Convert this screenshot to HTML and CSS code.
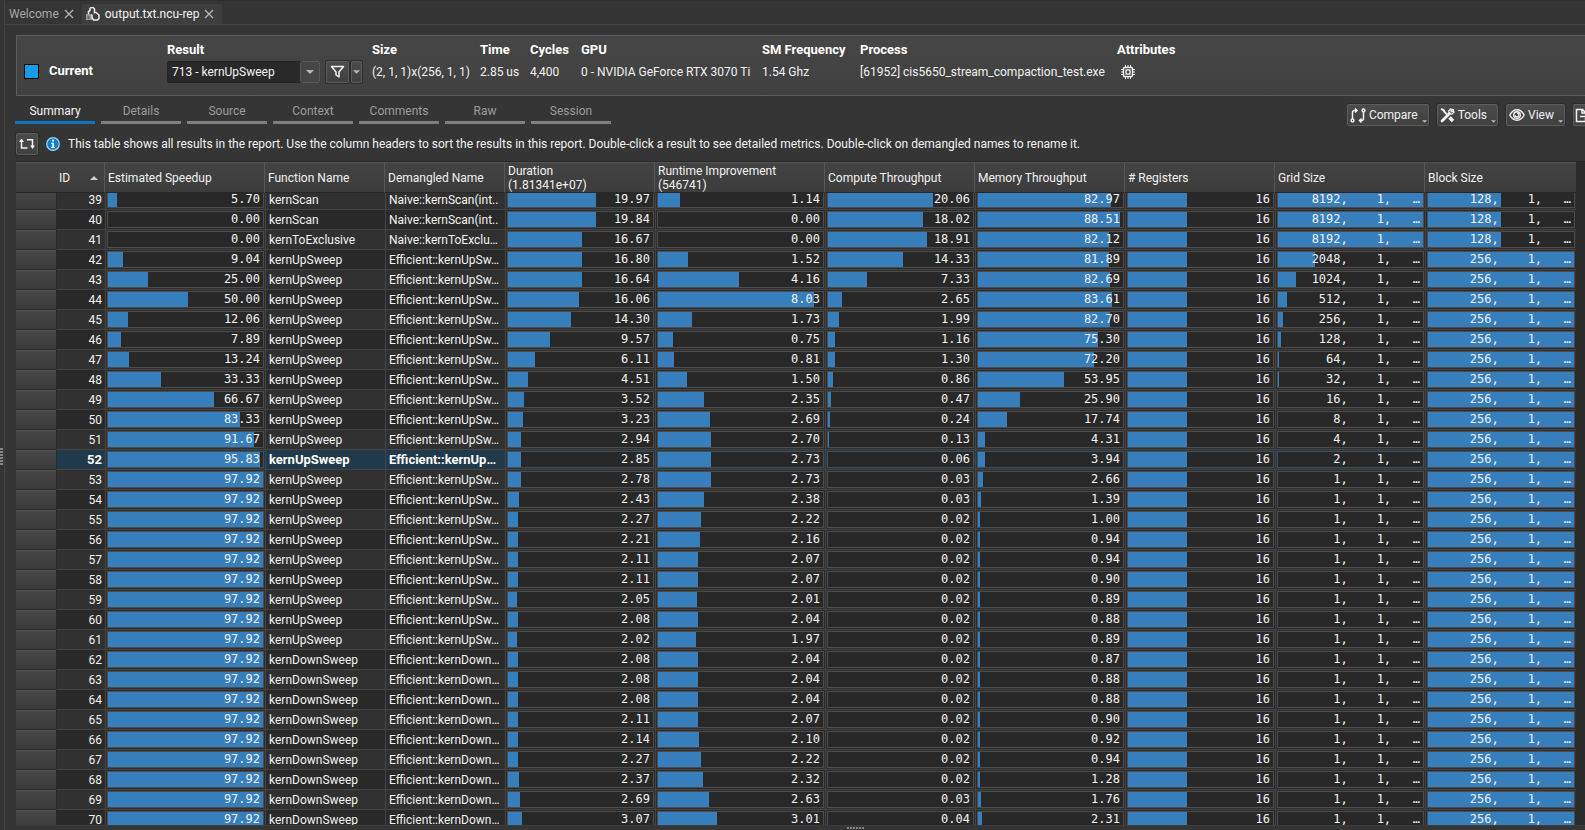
FILE: index.html
```
<!DOCTYPE html>
<html lang="en">
<head>
<meta charset="utf-8">
<title>output.txt.ncu-rep</title>
<link rel="stylesheet" href="styles.css">
</head>
<body>
<div class="rail" aria-hidden="true"><span class="grip grip-v"></span></div>
<div class="window">
  <nav class="doc-tabs">
    <div class="doc-tab"><a href="#welcome">Welcome</a><button class="close" aria-label="Close Welcome"><svg width="10" height="10" viewBox="0 0 10 10"><path d="M1 1l8 8M9 1l-8 8"/></svg></button></div>
    <div class="doc-tab active"><svg class="doc-icon" width="14" height="14" viewBox="0 0 14 14"><path d="M0 7h6v6h-6z" fill="#999"/><path d="M2.500 7v-2.500l1.500-1v-2l1.500-1h1.500l1.500 1.500v4.500M6 7.500v3l1.500 2.500h4l1.500-1.500v-3.500l-3.500-3" fill="none" stroke="#eee" stroke-width="1.500"/><path d="M1.500 9.500h2v2h-2z" fill="#555"/></svg><a href="#report">output.txt.ncu-rep</a><button class="close" aria-label="Close report"><svg width="10" height="10" viewBox="0 0 10 10"><path d="M1 1l8 8M9 1l-8 8"/></svg></button></div>
  </nav>

  <main class="report">
    <section class="baseline">
      <div class="current"><span class="swatch"></span><b>Current</b></div>
      <div class="field result">
        <label for="result">Result</label>
        <div class="picker">
          <div class="combo">
            <select id="result"><option>713 - kernUpSweep</option></select>
            <span class="combo-arrow"><svg width="8" height="4" viewBox="0 0 8 4"><path d="M0 0h8l-4 4z"/></svg></span>
          </div>
          <button class="btn filter" aria-label="Filter"><svg width="15" height="14" viewBox="0 0 15 14"><path d="M1.500 1.500h12l-4.500 5.500v5l-3-2v-3z" fill="none" stroke="#f2f2f2" stroke-width="1.500" stroke-linejoin="round"/></svg></button>
          <button class="btn filter-more" aria-label="Filter options"><svg width="7" height="4" viewBox="0 0 8 4"><path d="M0 0h8l-4 4z" fill="#b8b8b8"/></svg></button>
        </div>
      </div>
      <dl class="facts">
        <div class="field"><dt>Size</dt><dd>(2, 1, 1)x(256, 1, 1)</dd></div>
        <div class="field"><dt>Time</dt><dd>2.85 us</dd></div>
        <div class="field"><dt>Cycles</dt><dd>4,400</dd></div>
        <div class="field"><dt>GPU</dt><dd>0 - NVIDIA GeForce RTX 3070 Ti</dd></div>
        <div class="field"><dt>SM Frequency</dt><dd>1.54 Ghz</dd></div>
        <div class="field"><dt>Process</dt><dd>[61952] cis5650_stream_compaction_test.exe</dd></div>
        <div class="field"><dt>Attributes</dt><dd class="chip"><svg width="14" height="14" viewBox="0 0 14 14" fill="none" stroke="#f0f0f0"><rect x="2.500" y="2.500" width="9" height="9" rx="1" stroke-width="1.400"/><rect x="5" y="5" width="4" height="4" stroke-width="1.300"/><path d="M4.500 0v2M7 0v2M9.500 0v2M4.500 12v2M7 12v2M9.500 12v2M0 4.500h2M0 7h2M0 9.500h2M12 4.500h2M12 7h2M12 9.500h2"/></svg></dd></div>
      </dl>
    </section>

    <div class="bar">
      <nav class="pages">
        <a class="on" href="#summary">Summary</a>
        <a href="#details">Details</a>
        <a href="#source">Source</a>
        <a href="#context">Context</a>
        <a href="#comments">Comments</a>
        <a href="#raw">Raw</a>
        <a href="#session">Session</a>
      </nav>
      <div class="tools">
        <button class="btn menu"><svg width="16" height="15" viewBox="-1 0 16 15" fill="none" stroke="#f2f2f2" stroke-width="1.500"><circle cx="1.500" cy="12.500" r="1.400"/><path d="M1.500 11v-6.500q0-2 2-2h2M4 .5l2 2-2 2"/><circle cx="12.500" cy="2.500" r="1.400"/><path d="M12.500 4v6.500q0 2-2 2h-2M10.500 10.500l-2 2 2 2"/></svg>Compare<svg class="corner" width="5" height="3" viewBox="0 0 8 4"><path d="M0 0h8l-4 4z"/></svg></button>
        <button class="btn menu"><svg width="15" height="15" viewBox="0 0 15 15" fill="none" stroke="#f2f2f2"><path d="M1 1l2.500 1 1 2 4 4" stroke-width="2"/><path d="M9.500 9.500l3.500 3.500" stroke-width="3.500"/><path d="M2 13l7.500-7.500" stroke-width="2.800" stroke-linecap="round"/><path d="M13 1.500l-2.500-.5-1.800 2 .4 2.800 2.900.4 2-1.800-.4-1.700-1.600 1.300-1.200-1.100z" stroke-width="1.200"/></svg>Tools<svg class="corner" width="5" height="3" viewBox="0 0 8 4"><path d="M0 0h8l-4 4z"/></svg></button>
        <button class="btn menu"><svg width="16" height="14" viewBox="0 0 16 14" fill="none" stroke="#f2f2f2" stroke-width="1.400"><path d="M.8 7q2.700-5.200 7.200-5.200t7.200 5.200q-2.700 5.200-7.200 5.200t-7.200-5.200z"/><circle cx="8" cy="7" r="3.300"/><path d="M8 5.200q1.800 0 1.800 1.800t-1.800 1.800-1.800-1.600" stroke-width="1.200"/></svg>View<svg class="corner" width="5" height="3" viewBox="0 0 8 4"><path d="M0 0h8l-4 4z"/></svg></button>
        <button class="btn export" aria-label="Export"><svg width="15" height="15" viewBox="0 0 15 15" fill="none" stroke="#f2f2f2" stroke-width="1.500"><path d="M10.500 10v3.500h-9v-12h6l3 3v2M7 1.500v3.500h3.500M5 8.500h9"/></svg></button>
      </div>
    </div>

    <div class="hint">
      <button class="btn transpose" aria-label="Transpose table"><svg width="16" height="12" viewBox="0 0 16 12" fill="none" stroke="#f2f2f2" stroke-width="1.500"><path d="M2.500 3v7h6M8 1.800h5.500v6.500"/><path d="M0 4l2.500-3.500 2.500 3.500zM11 7.500h5l-2.500 3.500z" fill="#f2f2f2" stroke="none"/></svg></button>
      <svg width="14" height="14" viewBox="0 0 14 14"><circle cx="7" cy="7" r="6.300" fill="#0d7fd0" stroke="#a9d5f2" stroke-width="1.200"/><path d="M6 2.800h2v1.700h-2zM5.200 5.800h2.800v4h1v1.200h-3.800v-1.200h1v-2.800h-1z" fill="#fff"/></svg>
      <span>This table shows all results in the report. Use the column headers to sort the results in this report. Double-click a result to see detailed metrics. Double-click on demangled names to rename it.</span>
    </div>

    <div class="results">
      <table>
        <colgroup><col class="c40"><col class="c49"><col class="c160"><col class="c120"><col class="c120"><col class="c150"><col class="c170"><col class="c150"><col class="c150"><col class="c150"><col class="c150"><col></colgroup>
        <thead>
          <tr>
            <th class="stub"></th>
            <th><div class="sorted">ID<svg width="8" height="4" viewBox="0 0 8 4"><path d="M0 4h8l-4-4z" fill="#ccc"/></svg></div></th>
            <th>Estimated Speedup</th><th>Function Name</th><th>Demangled Name</th>
            <th>Duration<br>(1.81341e+07)</th><th>Runtime Improvement<br>(546741)</th>
            <th>Compute Throughput</th><th>Memory Throughput</th><th># Registers</th><th>Grid Size</th><th>Block Size</th>
          </tr>
        </thead>
        <tbody id="rows"></tbody>
      </table>
    </div>
    <div class="foot" aria-hidden="true"><span class="grip grip-h"></span></div>
  </main>
</div>
<script src="rows.js"></script>
</body>
</html>
```

FILE: styles.css
```
* { box-sizing: border-box; }

body {
  margin: 0;
  height: 100vh;
  display: flex;
  overflow: hidden;
  background: #353535;
  color: #f2f2f2;
  font: 12px/14px Roboto, sans-serif;
}

button, select { font: inherit; color: inherit; }
a { color: inherit; text-decoration: none; }

.rail {
  flex: 0 0 5px;
  display: flex;
  align-items: center;
  padding-top: 82px;
  border-right: 1px solid #444;
}
.grip { display: block; }
.grip-v { width: 3px; height: 17px; background: repeating-linear-gradient(#858585 0 2px, transparent 2px 3px); }
.grip-h { width: 17px; height: 2px; background: repeating-linear-gradient(90deg, #858585 0 2px, transparent 2px 3px); }

.window { flex: 1; min-width: 0; display: flex; flex-direction: column; }

.doc-tabs {
  display: flex;
  height: 25px;
  padding-top: 3px;
  border-top: 1px solid #303030;
  border-bottom: 1px solid #454545;
  color: #a8a8a8;
}
.doc-tab { display: flex; align-items: center; gap: 5px; padding: 0 8px 0 4px; }
.doc-tab.active { background: #3e3e3e; color: #f2f2f2; }
.close { display: flex; padding: 0; border: 0; background: none; }
.close path { stroke: #b5b5b5; stroke-width: 1.300; }

.report { flex: 1; min-height: 0; display: flex; flex-direction: column; padding: 10px 0 0 11px; }

.baseline {
  display: flex;
  height: 61px;
  padding: 7px 0 0 7px;
  border: 1px solid #5c5c5c;
  border-right: 0;
  background: linear-gradient(#464646, #404040);
}
.current { display: flex; align-items: center; gap: 10px; width: 143px; height: 38px; padding-top: 18px; }
.swatch { width: 15px; height: 15px; border: 1px solid #000; background: #1a9be6; }
.current b, .field dt, .field label { font-size: 13px; font-weight: 700; color: #fff; }
.field { display: flex; flex-direction: column; gap: 8px; white-space: nowrap; }
.result { width: 205px; gap: 4px; }
.picker { display: flex; gap: 2px; }
.combo { position: relative; width: 153px; height: 22px; margin-right: 4px; }
.combo select {
  width: 100%;
  height: 100%;
  padding: 0 24px 0 4px;
  border: 1px solid #252525;
  border-radius: 2px;
  background: #292929;
  appearance: none;
}
.combo-arrow {
  position: absolute;
  inset: 0 0 0 auto;
  width: 20px;
  display: flex;
  align-items: center;
  justify-content: center;
  border: 1px solid #585858;
  border-radius: 2px;
  background: #464646;
  pointer-events: none;
}
.combo-arrow path, .corner path { fill: #b8b8b8; }

.btn {
  display: flex;
  align-items: center;
  justify-content: center;
  height: 22px;
  padding: 0;
  border: 1px solid #5c5c5c;
  border-radius: 2px;
  background: linear-gradient(#4b4b4b, #404040);
  box-shadow: 0 0 0 1px #2c2c2c;
}
.filter { width: 23px; }
.filter-more { width: 11px; }

.facts {
  display: grid;
  grid-template-columns: 98px 40px 41px 171px 88px 247px auto;
  column-gap: 10px;
  margin: 0;
}
.facts dd { margin: 0; }
.facts .chip { padding-left: 4px; }

.bar { display: flex; justify-content: space-between; height: 30px; }
.pages { display: flex; gap: 6px; height: 28px; margin-left: -1px; color: #9c9c9c; }
.pages a { width: 80px; padding-top: 8px; border-bottom: 3px solid #7e7e7e; text-align: center; }
.pages .on { color: #f2f2f2; border-color: #0877c0; }
.tools { display: flex; gap: 8px; padding-top: 8px; overflow: hidden; }
.menu { position: relative; gap: 3px; padding: 0 10px 0 2px; }
.corner { position: absolute; right: 1px; bottom: 2px; }
.export { justify-content: flex-start; width: 12px; padding-left: 1px; border-right: 0; border-radius: 2px 0 0 2px; overflow: hidden; }
.export svg { flex: none; }

.hint { display: flex; align-items: center; height: 35px; gap: 8px; white-space: nowrap; }
.transpose { width: 22px; }

.results { flex: 1; min-height: 0; overflow: hidden; border-top: 1px solid #262626; background: #2b2b2b; }
table { width: calc(100% - 9px); margin-top: -3px; table-layout: fixed; border-spacing: 0; }
.c40 { width: 40px; }
.c49 { width: 49px; }
.c120 { width: 120px; }
.c150 { width: 150px; }
.c160 { width: 160px; }
.c170 { width: 170px; }

th {
  position: sticky;
  top: 0;
  z-index: 1;
  height: 31px;
  padding: 0 0 0 3px;
  border-right: 1px solid #575757;
  border-bottom: 1px solid #272727;
  border-top: 1px solid #555;
  background: linear-gradient(#434343, #3c3c3c);
  font-weight: 400;
  text-align: left;
  white-space: nowrap;
}
th.stub, th:last-child { border-right: 0; }
.sorted { display: flex; align-items: center; justify-content: space-between; padding-right: 6px; }

td {
  height: 20px;
  padding: 0;
  border-bottom: 1px solid #444;
  border-left: 1px solid #444;
  background: #292929;
  white-space: nowrap;
  overflow: hidden;
}
tr:nth-child(odd) td { background: #303030; }
td.stub { border-left: 0; border-bottom: 1px solid #282828; border-top: 1px solid #555; background: linear-gradient(#454545, #3c3c3c); }
tr:nth-child(odd) td.stub { background: linear-gradient(#454545, #3c3c3c); }
td.id { padding-right: 3px; border-left-color: #292929; text-align: right; }
td.name { padding-left: 3px; }
tr.selected td:not(.stub) { background: #213a4b; }
tr.selected .id, tr.selected .name { font-size: 13px; font-weight: 700; color: #fff; }

.meter {
  display: grid;
  height: 17px;
  margin: 1px;
  border: 1px solid #4c4c4c;
  background: #282828;
  font: 12px/15px "DejaVu Sans Mono", monospace;
}
.meter > * { grid-area: 1 / 1; }
.fill { background: #377fbc; }
.value { padding-right: 3px; text-align: right; white-space: pre; }

.foot { display: flex; justify-content: center; height: 5px; padding: 1px 0 0 110px; border-top: 1px solid #3c3c3c; }
```

FILE: rows.js
```
// speedup, duration, runtime improvement, compute %, memory %, grid x
const data = [
  [5.70, 19.97, 1.14, 20.06, 82.97, 8192], [0, 19.84, 0, 18.02, 88.51, 8192], [0, 16.67, 0, 18.91, 82.12, 8192],
  [9.04, 16.80, 1.52, 14.33, 81.89, 2048], [25, 16.64, 4.16, 7.33, 82.69, 1024], [50, 16.06, 8.03, 2.65, 83.61, 512],
  [12.06, 14.30, 1.73, 1.99, 82.70, 256], [7.89, 9.57, 0.75, 1.16, 75.30, 128], [13.24, 6.11, 0.81, 1.30, 72.20, 64],
  [33.33, 4.51, 1.50, 0.86, 53.95, 32], [66.67, 3.52, 2.35, 0.47, 25.90, 16], [83.33, 3.23, 2.69, 0.24, 17.74, 8],
  [91.67, 2.94, 2.70, 0.13, 4.31, 4], [95.83, 2.85, 2.73, 0.06, 3.94, 2], [97.92, 2.78, 2.73, 0.03, 2.66, 1],
  [97.92, 2.43, 2.38, 0.03, 1.39, 1], [97.92, 2.27, 2.22, 0.02, 1.00, 1], [97.92, 2.21, 2.16, 0.02, 0.94, 1],
  [97.92, 2.11, 2.07, 0.02, 0.94, 1], [97.92, 2.11, 2.07, 0.02, 0.90, 1], [97.92, 2.05, 2.01, 0.02, 0.89, 1],
  [97.92, 2.08, 2.04, 0.02, 0.88, 1], [97.92, 2.02, 1.97, 0.02, 0.89, 1], [97.92, 2.08, 2.04, 0.02, 0.87, 1],
  [97.92, 2.08, 2.04, 0.02, 0.88, 1], [97.92, 2.08, 2.04, 0.02, 0.88, 1], [97.92, 2.11, 2.07, 0.02, 0.90, 1],
  [97.92, 2.14, 2.10, 0.02, 0.92, 1], [97.92, 2.27, 2.22, 0.02, 0.94, 1], [97.92, 2.37, 2.32, 0.02, 1.28, 1],
  [97.92, 2.69, 2.63, 0.03, 1.76, 1], [97.92, 3.07, 3.01, 0.04, 2.31, 1]
];

const meter = (percent, text) =>
  `<td><div class="meter"><span class="fill" style="width:${Math.min(percent, 100).toFixed(1)}%"></span><span class="value">${text}</span></div></td>`;
const num = (value, scale) => meter(value < 0.1 ? 0 : value * scale + 0.3, value.toFixed(2));

function names(id) {
  if (id < 41) return ["kernScan", "Naive::kernScan(int.."];
  if (id === 41) return ["kernToExclusive", "Naive::kernToExclu…"];
  if (id === 52) return ["kernUpSweep", "Efficient::kernUp…"];
  if (id < 62) return ["kernUpSweep", "Efficient::kernUpSw…"];
  return ["kernDownSweep", "Efficient::kernDown…"];
}

document.getElementById("rows").innerHTML = data.map((d, i) => {
  const id = 39 + i;
  const [fn, full] = names(id);
  const block = id < 42 ? 128 : 256;
  return `<tr${id === 52 ? ' class="selected"' : ""}><td class="stub"></td><td class="id">${id}</td>` +
    num(d[0], 100 / 97.92) +
    `<td class="name">${fn}</td><td class="name">${full}</td>` +
    num(d[1], 3.03) + num(d[2], 11.7) + num(d[3], 3.6) + num(d[4], 1.1) +
    meter(40.5, "16") +
    meter(d[5] < 32 ? 0 : d[5] / 81.92 + 0.2, `${d[5]},    1,   …`) +
    meter(block / 2.56, `${block},    1,   …`) + "</tr>";
}).join("");
```
